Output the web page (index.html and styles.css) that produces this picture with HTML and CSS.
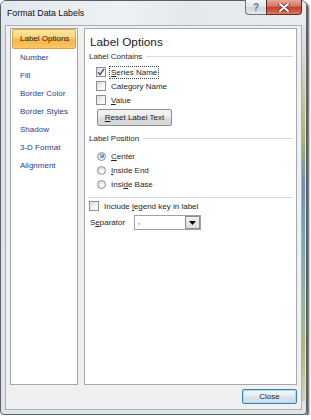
FILE: index.html
```html
<!DOCTYPE html>
<html lang="en">
<head>
    <meta charset="UTF-8">
    <title>Format Data Labels</title>
    <link rel="stylesheet" href="styles.css">
</head>
<body>
    <div class="window">
        <div class="titlebar">
            <span class="title">Format Data Labels</span>
            <div class="caption-buttons">
                <span class="cap-btn help">?</span>
                <span class="cap-btn close">
                    <svg width="12" height="9" viewBox="0 0 12 9">
                        <path d="M2 1 L10 8 M10 1 L2 8" stroke="#5a2a22" stroke-width="3.4" stroke-linecap="round"/>
                        <path d="M2 1 L10 8 M10 1 L2 8" stroke="#fff" stroke-width="2" stroke-linecap="round"/>
                    </svg>
                </span>
            </div>
        </div>
        <div class="client">
            <div class="panes">
                <ul class="nav">
                    <li class="active">Label Options</li>
                    <li>Number</li>
                    <li>Fill</li>
                    <li>Border Color</li>
                    <li>Border Styles</li>
                    <li>Shadow</li>
                    <li>3-D Format</li>
                    <li>Alignment</li>
                </ul>
                <div class="main">
                    <div class="heading">Label Options</div>

                    <div class="group-title"><span>Label Contains</span><i></i></div>
                    <div class="option">
                        <span class="check checked">
                            <svg width="8" height="8" viewBox="0 0 8 8"><path d="M1 4.2 L3 6.6 L7 0.8" fill="none" stroke="#3b4f74" stroke-width="1.4"/></svg>
                        </span>
                        <span class="focus"><u>S</u>eries Name</span>
                    </div>
                    <div class="option">
                        <span class="check"></span>
                        <span>Cate<u>g</u>ory Name</span>
                    </div>
                    <div class="option">
                        <span class="check"></span>
                        <span><u>V</u>alue</span>
                    </div>
                    <button class="btn reset"><u>R</u>eset Label Text</button>

                    <div class="group-title"><span>Label Position</span><i></i></div>
                    <div class="option radio-row">
                        <span class="radio on"></span>
                        <span><u>C</u>enter</span>
                    </div>
                    <div class="option radio-row">
                        <span class="radio"></span>
                        <span><u>I</u>nside End</span>
                    </div>
                    <div class="option radio-row">
                        <span class="radio"></span>
                        <span>Insi<u>d</u>e Base</span>
                    </div>

                    <div class="rule"></div>
                    <div class="option legend">
                        <span class="check"></span>
                        <span>Include <u>l</u>egend key in label</span>
                    </div>
                    <div class="separator-row">
                        <span class="sep-label">S<u>e</u>parator</span>
                        <div class="combo">
                            <span class="combo-text">,</span>
                            <span class="combo-btn">
                                <svg width="7" height="4" viewBox="0 0 7 4"><path d="M0 0 H7 L3.5 4 Z" fill="#000"/></svg>
                            </span>
                        </div>
                    </div>
                </div>
            </div>
            <div class="footer">
                <button class="btn close-btn">Close</button>
            </div>
        </div>
    </div>
</body>
</html>
```

FILE: styles.css
```css
body{
    margin:0;
    background:#fff;
    font-family:"Liberation Sans", Arial, sans-serif;
    font-size:8px;
    color:#1e1e1e;
}
.window{
    width:305px;
    height:413px;
    border:1px solid #5b5f64;
    border-radius:6px 6px 4px 4px;
    background:
        linear-gradient(#d8dfe5, #b8c79a 18%, #9fb66f 28%, #6f8fb8 40%, #78a9b5 55%, #8fb4a8 70%, #a9bb7a 85%, #c9d3b8) right 1px top 40px / 3px 360px no-repeat,
        linear-gradient(#e4e9ee, #dde3e9 30px, #dfe5ea);
    box-shadow:2px 2px 2px rgba(0,0,0,.65);
    display:flex;
    flex-direction:column;
}
.titlebar{
    height:24px;
    display:flex;
    justify-content:space-between;
    align-items:flex-start;
    background:linear-gradient(90deg, #e2e8ee, #eef1f4 40%, #e4e9ee 60%, #e8ecf0);
    border-radius:5px 5px 0 0;
}
.title{
    font-size:8.8px;
    color:#111;
    padding-left:6px;
    line-height:24px;
}
.caption-buttons{
    display:flex;
    margin-top:-1px;
    margin-right:4px;
}
.cap-btn{
    height:14px;
    display:flex;
    align-items:center;
    justify-content:center;
    border:1px solid #6f7780;
    border-top:none;
}
.help{
    width:20px;
    border-right:none;
    border-radius:0 0 0 4px;
    background:linear-gradient(#f3f5f7, #dfe4e9 50%, #cfd6dd 51%, #e1e6ea);
    color:#70767c;
    font-size:10px;
    font-weight:bold;
}
.close{
    width:34px;
    border-color:#6b2a20;
    border-radius:0 0 4px 0;
    background:linear-gradient(#e9a999, #d6725f 45%, #c3432d 52%, #cf5a45 80%, #e0826c);
}
.client{
    margin:0 4px 4px 4px;
    flex:1;
    border:1px solid #a9b0b8;
    background:#f0f0f0;
    padding:2px 4px 5px 4px;
    display:flex;
    flex-direction:column;
}
.panes{
    display:flex;
    gap:6px;
    height:357px;
}
.nav{
    width:64px;
    margin:0;
    padding:0 1px;
    list-style:none;
    background:#fff;
    border:1px solid #a4a9b0;
}
.nav li{
    height:18px;
    line-height:18px;
    padding-left:8px;
    color:#243f8f;
    white-space:nowrap;
}
.nav li.active{
    height:18px;
    line-height:17px;
    padding-left:7px;
    color:#1c1c1c;
    border:1px solid #e4a23c;
    border-radius:2px;
    background:linear-gradient(#fde7a3, #fcd67c 40%, #f9b443 55%, #fbc768);
}
.main{
    flex:1;
    background:#fff;
    border:1px solid #a4a9b0;
    padding-top:5px;
}
.heading{
    font-size:11.8px;
    line-height:16px;
    color:#222;
    padding-left:5px;
}
.group-title{
    display:flex;
    align-items:center;
    height:12px;
    padding-left:4px;
    color:#2a2a2a;
}
.group-title i{
    flex:1;
    border-top:1px solid #d4dbe2;
    margin:0 3px 0 4px;
}
.group-title + .option{
    margin-top:3px;
}
.option{
    display:flex;
    align-items:center;
    gap:5px;
    height:14px;
    padding-left:11px;
}
.check{
    width:8px;
    height:8px;
    border:1px solid #8d9196;
    background:linear-gradient(135deg, #dcdcdc, #f4f4f4 60%, #fff);
    display:flex;
    align-items:center;
    justify-content:center;
}
.focus{
    outline:1px dotted #444;
    outline-offset:1px;
}
.btn{
    font-family:"Liberation Sans", Arial, sans-serif;
    font-size:8px;
    color:#1e1e1e;
    border:1px solid #8a8e93;
    border-radius:2px;
    background:linear-gradient(#f4f4f4, #ebebeb 48%, #dcdcdc 52%, #d6d6d6);
    padding:0;
}
.reset{
    display:block;
    width:75px;
    height:17px;
    margin:2px 0 0 12px;
}
.reset + .group-title{
    margin-top:6px;
}
.radio-row{
    padding-left:12px;
}
.group-title + .radio-row{
    margin-top:5px;
}
.radio{
    width:7px;
    height:7px;
    border:1px solid #8d9196;
    border-radius:50%;
    background:radial-gradient(circle at 60% 65%, #fff, #e2e2e2 60%, #cfcfcf);
    display:flex;
    align-items:center;
    justify-content:center;
}
.radio.on::after{
    content:"";
    width:4px;
    height:4px;
    border-radius:50%;
    background:radial-gradient(circle at 40% 35%, #8ed0f3, #2a6fb5 70%);
}
.rule{
    margin:6px 3px 1px 3px;
    border-top:1px solid #d4dbe2;
}
.legend{
    padding-left:4px;
}
.separator-row{
    display:flex;
    align-items:center;
    margin-top:2px;
    padding-left:5px;
}
.sep-label{
    width:44px;
}
.combo{
    width:65px;
    height:13px;
    border:1px solid #9ca2a8;
    display:flex;
}
.combo-text{
    flex:1;
    padding-left:3px;
    line-height:11px;
}
.combo-btn{
    width:13px;
    border:1px solid #8a8e93;
    background:linear-gradient(#f3f3f3, #dcdcdc);
    display:flex;
    align-items:center;
    justify-content:center;
}
.footer{
    display:flex;
    justify-content:flex-end;
    margin-top:4px;
}
.close-btn{
    width:55px;
    height:15px;
    border-color:#3c7fb1;
    box-shadow:inset 0 0 0 1px #a7dcf5;
    background:linear-gradient(#f2f6f8, #e6eef2 48%, #d5e2ea 52%, #d2dfe7);
}
```
